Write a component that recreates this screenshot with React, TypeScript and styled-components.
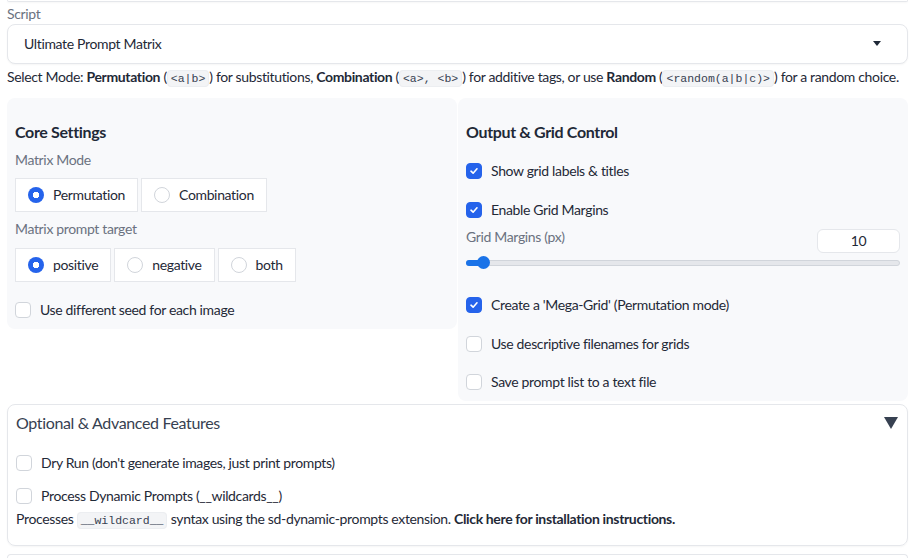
import React from "react";
import styled, { createGlobalStyle } from "styled-components";

const Global = createGlobalStyle`
  html, body { margin: 0; padding: 0; background: #fff; }
  body { font-family: "Source Sans Pro", Lato, "Noto Sans", sans-serif; color: #1f2937; font-size: 14px; letter-spacing: -0.35px; }
  * { box-sizing: border-box; }
`;

const Page = styled.div`
  width: 910px;
  height: 558px;
  overflow: hidden;
  padding: 0 2px 0 7px;
  display: flex;
  flex-direction: column;
`;

const PrevEdge = styled.div`
  height: 2px;
  border: 1px solid #e5e7eb;
  border-top: none;
  border-radius: 0 0 6px 6px;
  box-shadow: 0 1px 2px rgba(0,0,0,0.04);
`;

const FieldLabel = styled.div<{ $mt?: number }>`
  margin-top: ${p => p.$mt ?? 0}px;
  font-size: 14px;
  line-height: 20px;
  color: #6b7280;
`;

const Select = styled.div`
  height: 41px;
  border: 1px solid #e5e7eb;
  border-radius: 8px;
  background: #fff;
  display: flex;
  align-items: center;
  justify-content: space-between;
  padding: 0 26px 0 16px;
  font-size: 14px;
  color: #1f2937;
  box-shadow: 0 1px 2px rgba(0,0,0,0.04);
`;

const Caret = styled.span`
  width: 0; height: 0;
  border-left: 4px solid transparent;
  border-right: 4px solid transparent;
  border-top: 5px solid #1f2937;
`;

const Info = styled.div`
  margin-top: 3px;
  font-size: 14px;
  line-height: 20px;
  color: #1f2937;
  white-space: nowrap;
  b { font-weight: 700; }
`;

const Code = styled.code`
  font-family: "Liberation Mono", "DejaVu Sans Mono", monospace;
  font-size: 11.5px;
  letter-spacing: 0;
  background: #f3f4f6;
  border: 1px solid #eceef1;
  border-radius: 4px;
  padding: 1px 3px;
  color: #374151;
`;

const Columns = styled.div`
  margin-top: 9px;
  display: flex;
  align-items: flex-start;
  gap: 1px;
`;

const Panel = styled.div<{ $h: number }>`
  flex: 1;
  height: ${p => p.$h}px;
  background: #f8f9fb;
  border-radius: 8px;
  padding: 24px 8px 0 8px;
  display: flex;
  flex-direction: column;
`;

const Title = styled.h3`
  margin: 0;
  font-size: 16px;
  line-height: 20px;
  font-weight: 700;
  color: #1f2937;
`;

const RadioRow = styled.div<{ $mt: number }>`
  margin-top: ${p => p.$mt}px;
  display: flex;
  gap: 3px;
`;

const RadioItem = styled.label`
  height: 34px;
  display: flex;
  align-items: center;
  gap: 9px;
  padding: 0 12px 0 12px;
  background: #fff;
  border: 1px solid #e5e7eb;
  font-size: 14px;
  color: #1f2937;
`;

const RadioDot = styled.span<{ $on?: boolean }>`
  width: 16px; height: 16px;
  border-radius: 50%;
  flex: none;
  ${p => p.$on
    ? `border: none; background: radial-gradient(circle, #fff 0 3px, #2563eb 3.5px);`
    : `background: #fff; border: 1px solid #d1d5db;`}
`;

const CheckRow = styled.label<{ $mt: number }>`
  margin-top: ${p => p.$mt}px;
  height: 20px;
  display: flex;
  align-items: center;
  gap: 9px;
  font-size: 14px;
  color: #1f2937;
`;

const Box = styled.span<{ $on?: boolean }>`
  width: 16px; height: 16px;
  flex: none;
  border-radius: 4px;
  display: flex;
  align-items: center;
  justify-content: center;
  ${p => p.$on ? `background: #2563eb; border: 1px solid #2563eb;` : `background: #fff; border: 1px solid #d1d5db;`}
`;

const SliderHead = styled.div`
  margin-top: 9px;
  display: flex;
  justify-content: space-between;
  align-items: flex-start;
  height: 24px;
`;

const SliderLabel = styled(FieldLabel)`
  margin-top: -2px;
`;

const NumberBox = styled.div`
  width: 83px;
  height: 24px;
  border: 1px solid #e5e7eb;
  border-radius: 6px;
  background: #fff;
  display: flex;
  align-items: center;
  justify-content: center;
  font-size: 14px;
  color: #1f2937;
`;

const Track = styled.div`
  position: relative;
  margin-top: 7px;
  height: 6px;
  border-radius: 3px;
  background: #e5e7eb;
  border: 1px solid #d1d5db;
`;

const Fill = styled.div`
  position: absolute;
  left: -1px; top: -1px; bottom: -1px;
  background: #1a73e8;
  border-radius: 3px;
`;

const Thumb = styled.div`
  position: absolute;
  top: 50%;
  width: 13px; height: 13px;
  margin-left: -6px;
  margin-top: -6.5px;
  border-radius: 50%;
  background: #1a73e8;
`;

const Accordion = styled.div`
  margin-top: 3px;
  height: 147px;
  border: 1px solid #e5e7eb;
  border-radius: 8px;
  padding: 7px 8px 0 8px;
  display: flex;
  flex-direction: column;
  box-shadow: 0 1px 2px rgba(0,0,0,0.04);
`;

const AccHead = styled.div`
  display: flex;
  justify-content: space-between;
  align-items: center;
  height: 22px;
  font-size: 16px;
  color: #374151;
`;

const Tri = styled.span`
  width: 0; height: 0;
  border-left: 7px solid transparent;
  border-right: 7px solid transparent;
  border-top: 12px solid #374151;
  margin-right: 1px;
`;

const AccInfo = styled.div`
  margin-top: 3px;
  font-size: 14px;
  line-height: 20px;
  color: #1f2937;
  b { font-weight: 700; }
`;

const NextEdge = styled.div`
  margin-top: 8px;
  height: 4px;
  border: 1px solid #e5e7eb;
  border-bottom: none;
  border-radius: 6px 6px 0 0;
`;

const Check = () => (
  <svg width="10" height="10" viewBox="0 0 10 10">
    <path d="M2 5.2 L4.1 7.2 L8 2.8" fill="none" stroke="#fff" strokeWidth="1.6" strokeLinecap="round" strokeLinejoin="round" />
  </svg>
);

const Radio = ({ label, on }: { label: string; on?: boolean }) => (
  <RadioItem>
    <RadioDot $on={on} />
    {label}
  </RadioItem>
);

const CB = ({ label, on, mt }: { label: React.ReactNode; on?: boolean; mt: number }) => (
  <CheckRow $mt={mt}>
    <Box $on={on}>{on && <Check />}</Box>
    {label}
  </CheckRow>
);

export default function App() {
  const pct = Math.max(10 / 300, 0.037) * 100;
  return (
    <>
      <Global />
      <Page>
        <PrevEdge />
        <FieldLabel $mt={2}>Script</FieldLabel>
        <Select>
          <span>Ultimate Prompt Matrix</span>
          <Caret />
        </Select>
        <Info>
          Select Mode: <b>Permutation</b> (<Code>&lt;a|b&gt;</Code>) for substitutions, <b>Combination</b> (<Code>&lt;a&gt;, &lt;b&gt;</Code>) for additive tags, or use <b>Random</b> (<Code>&lt;random(a|b|c)&gt;</Code>) for a random choice.
        </Info>
        <Columns>
          <Panel $h={231}>
            <Title>Core Settings</Title>
            <FieldLabel $mt={8}>Matrix Mode</FieldLabel>
            <RadioRow $mt={8}>
              <Radio label="Permutation" on />
              <Radio label="Combination" />
            </RadioRow>
            <FieldLabel $mt={7}>Matrix prompt target</FieldLabel>
            <RadioRow $mt={9}>
              <Radio label="positive" on />
              <Radio label="negative" />
              <Radio label="both" />
            </RadioRow>
            <CB mt={18} label="Use different seed for each image" />
          </Panel>
          <Panel $h={303}>
            <Title>Output &amp; Grid Control</Title>
            <CB mt={19} on label="Show grid labels & titles" />
            <CB mt={19} on label="Enable Grid Margins" />
            <SliderHead>
              <SliderLabel>Grid Margins (px)</SliderLabel>
              <NumberBox>10</NumberBox>
            </SliderHead>
            <Track>
              <Fill style={{ width: `${pct}%` }} />
              <Thumb style={{ left: `${pct}%` }} />
            </Track>
            <CB mt={29} on label="Create a 'Mega-Grid' (Permutation mode)" />
            <CB mt={19} label="Use descriptive filenames for grids" />
            <CB mt={18} label="Save prompt list to a text file" />
          </Panel>
        </Columns>
        <Accordion>
          <AccHead>
            <span>Optional &amp; Advanced Features</span>
            <Tri />
          </AccHead>
          <CB mt={19} label="Dry Run (don't generate images, just print prompts)" />
          <CB mt={13} label="Process Dynamic Prompts (__wildcards__)" />
          <AccInfo>
            Processes <Code>__wildcard__</Code> syntax using the sd-dynamic-prompts extension. <b>Click here for installation instructions.</b>
          </AccInfo>
        </Accordion>
        <NextEdge />
      </Page>
    </>
  );
}
